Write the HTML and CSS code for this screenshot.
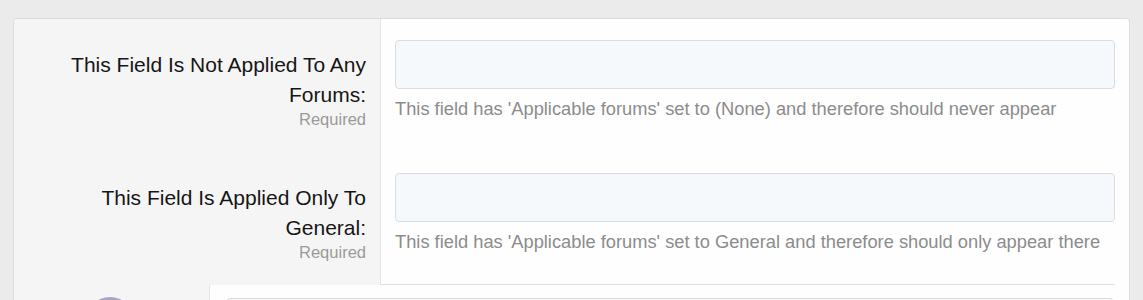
FILE: index.html
```html
<!DOCTYPE html>
<html lang="en">
<head>
  <meta charset="UTF-8" />
  <title>Thread Fields</title>
  <link rel="stylesheet" href="styles.css">
</head>
<body>

<div class="block">
  <!-- Custom thread fields -->
  <div class="form-row">
    <div class="form-label">
      <label for="field1">This Field Is Not Applied To Any Forums:</label>
      <span class="hint">Required</span>
    </div>
    <div class="form-input">
      <input type="text" id="field1" class="input" />
      <p class="explain">This field has 'Applicable forums' set to (None) and therefore should never appear</p>
    </div>
  </div>

  <div class="form-row">
    <div class="form-label">
      <label for="field2">This Field Is Applied Only To General:</label>
      <span class="hint">Required</span>
    </div>
    <div class="form-input">
      <input type="text" id="field2" class="input" />
      <p class="explain">This field has 'Applicable forums' set to General and therefore should only appear there</p>
    </div>
  </div>

  <!-- Message editor -->
  <div class="message-row">
    <div class="message-user">
      <span class="avatar"></span>
    </div>
    <div class="message-main">
      <div class="editor"></div>
    </div>
  </div>
</div>

</body>
</html>
```

FILE: styles.css
```css
/* General */
body {
  margin: 0;
  padding: 18px 13px 0 13px;
  background-color: #ebebeb;
  font-family: 'Liberation Sans', Arial, sans-serif;
  color: #141414;
  height: 300px;
  box-sizing: border-box;
  overflow: hidden;
}

/* Main block */
.block {
  background-color: #fefefe;
  border: 1px solid #dcdcdc;
  border-bottom: none;
  border-radius: 4px 4px 0 0;
  overflow: hidden;
}

/* Form rows */
.form-row {
  display: flex;
}

.form-label {
  width: 352px;
  flex-shrink: 0;
  background-color: #f5f5f5;
  border-right: 1px solid #e4e4e4;
  padding: 31px 14px 0 0;
  text-align: right;
}

.form-label label {
  display: block;
  font-size: 21px;
  line-height: 30px;
  color: #161616;
  padding-left: 16px;
}

.hint {
  display: block;
  font-size: 16.5px;
  line-height: 18px;
  color: #9a9a9a;
}

.form-input {
  flex: 1;
  margin-right: 14px;
  padding: 21px 0 31px 14px;
}

.form-row:nth-child(2) .form-input {
  padding-bottom: 30px;
  border-bottom: 1px solid #dedede;
}

.input {
  display: block;
  width: 100%;
  height: 49px;
  box-sizing: border-box;
  background-color: #f5f9fc;
  border: 1px solid #d9dde1;
  border-radius: 4px;
  font-size: 16px;
  padding: 8px 12px;
}

.explain {
  margin: 8px 0 0 0;
  font-size: 18.3px;
  line-height: 24px;
  color: #8c8c8c;
  white-space: nowrap;
}

/* Message row */
.message-row {
  display: flex;
  height: 15px;
  overflow: hidden;
}

.message-user {
  width: 195px;
  flex-shrink: 0;
  background-color: #f5f5f5;
  position: relative;
}

.avatar {
  position: absolute;
  top: 12px;
  left: 72px;
  width: 48px;
  height: 48px;
  border-radius: 50%;
  background-color: #a9a4c6;
}

.message-main {
  flex: 1;
  background-color: #fefefe;
  border-left: 1px solid #e4e4e4;
  padding: 13px 16px 0 17px;
}

.editor {
  height: 40px;
  border: 1px solid #d8d8d8;
  border-radius: 3px;
}
```
